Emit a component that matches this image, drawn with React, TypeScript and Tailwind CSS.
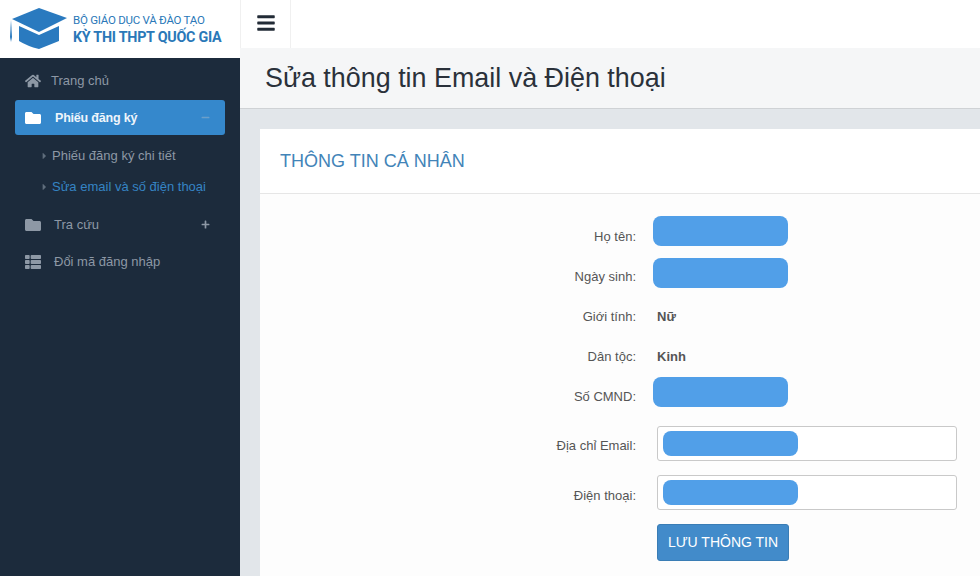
import { FaBars, FaCaretRight, FaFolder, FaHome, FaMinus, FaPlus, FaThList } from "react-icons/fa";

const Logo = () => (
  <svg width="58" height="44" viewBox="0 0 58 44" className="shrink-0">
    <path d="M2 11 L29 0 L57 10 L29 24 Z" fill="#2a7abf" />
    <path d="M9 18 L29 27 L49 18 L49 33 L29 41 Q17 38 9 33 Z" fill="#2a7abf" />
    <path d="M1 12 L2 29 L1 34 L0 29 Z" fill="#2a7abf" />
  </svg>
);

const Pill = ({ w = "w-[135px]", h = "h-[30px]" }: { w?: string; h?: string }) => (
  <div className={`${w} ${h} rounded-[8px] bg-[#519fe8]`} />
);

const Label = ({ text, className = "" }: { text: string; className?: string }) => (
  <div className={`w-[376px] shrink-0 text-right text-[13px] text-[#555] ${className}`}>{text}</div>
);

const App = () => {
  return (
    <div className="flex h-[576px] w-[980px] overflow-hidden font-['Liberation_Sans',sans-serif]">
      <aside className="flex w-[240px] shrink-0 flex-col bg-[#1c2b3c]">
        <div className="flex h-[58px] items-center bg-white pl-[10px] pt-[1px]">
          <Logo />
          <div className="ml-[5px] font-['Roboto',sans-serif] text-[#2a78b8]">
            <div className="text-[11.5px] leading-[16px] tracking-[-0.25px]">BỘ GIÁO DỤC VÀ ĐÀO TẠO</div>
            <div className="text-[14.3px] font-bold leading-[19px] tracking-[-0.25px]">KỲ THI THPT QUỐC GIA</div>
          </div>
        </div>
        <nav className="flex flex-col pt-[5px] text-[13px] text-[#8d98a5]">
          <div className="flex h-[35px] items-center pl-[25px]">
            <FaHome className="h-[16px] w-[16px]" />
            <span className="ml-[10px]">Trang chủ</span>
          </div>
          <div className="mx-[15px] mt-[2px] flex h-[35px] items-center rounded-[3px] bg-[#3588cc] pl-[10px] pr-[15px] text-white">
            <FaFolder className="h-[16px] w-[16px]" />
            <span className="ml-[14px] pt-[1px] text-[12.5px] font-bold tracking-[-0.2px] text-[#eef5fb]">Phiếu đăng ký</span>
            <FaMinus className="ml-auto h-[9px] w-[9px] text-[#6c9fc9]" />
          </div>
          <div className="mt-[5px] flex h-[31px] items-center pl-[41px]">
            <FaCaretRight className="h-[10px] w-[7px] text-[#5f6d7c]" />
            <span className="ml-[4px]">Phiếu đăng ký chi tiết</span>
          </div>
          <div className="flex h-[31px] items-center pl-[41px] text-[#3584c4]">
            <FaCaretRight className="h-[10px] w-[7px] text-[#5f6d7c]" />
            <span className="ml-[4px]">Sửa email và số điện thoại</span>
          </div>
          <div className="mt-[4px] flex h-[37px] items-center pl-[25px] pr-[30px]">
            <FaFolder className="h-[16px] w-[16px]" />
            <span className="ml-[13px]">Tra cứu</span>
            <FaPlus className="ml-auto h-[9px] w-[9px]" />
          </div>
          <div className="flex h-[37px] items-center pl-[25px]">
            <FaThList className="h-[16px] w-[16px]" />
            <span className="ml-[13px]">Đổi mã đăng nhập</span>
          </div>
        </nav>
      </aside>

      <main className="flex min-w-0 flex-1 flex-col bg-[#e2e6ea]">
        <div className="flex h-[48px] shrink-0 bg-white">
          <div className="flex w-[51px] items-center justify-center border-x border-[#f0f0f0] pb-[3px]">
            <FaBars className="h-[20px] w-[20px] text-[#222b36]" />
          </div>
        </div>
        <div className="flex h-[61px] shrink-0 items-center border-b border-[#cfd2d5] bg-[#f5f6f7] pl-[25px]">
          <h1 className="text-[26.9px] text-[#2a313a]">Sửa thông tin Email và Điện thoại</h1>
        </div>
        <section className="ml-[20px] mt-[20px] flex flex-1 flex-col bg-[#fdfdfd]">
          <div className="flex h-[65px] shrink-0 items-center border-b border-[#e6e6e6] bg-white pl-[20px]">
            <h2 className="text-[18px] text-[#4284b8]">THÔNG TIN CÁ NHÂN</h2>
          </div>
          <div className="flex flex-col pt-[22px]">
            <div className="flex h-[30px] items-center">
              <Label text="Họ tên:" className="pt-[11px]" />
              <div className="ml-[17px]"><Pill /></div>
            </div>
            <div className="mt-[12px] flex h-[30px] items-center">
              <Label text="Ngày sinh:" className="pt-[7px]" />
              <div className="ml-[17px]"><Pill /></div>
            </div>
            <div className="mt-[8px] flex h-[40px] items-center">
              <Label text="Giới tính:" className="pt-[1px]" />
              <div className="ml-[21px] pt-[1px] text-[13px] font-bold text-[#555]">Nữ</div>
            </div>
            <div className="flex h-[40px] items-center">
              <Label text="Dân tộc:" className="pt-[1px]" />
              <div className="ml-[21px] pt-[1px] text-[13px] font-bold text-[#555]">Kinh</div>
            </div>
            <div className="mt-[1px] flex h-[30px] items-center">
              <Label text="Số CMND:" className="pt-[9px]" />
              <div className="ml-[17px]"><Pill /></div>
            </div>
            <div className="mt-[19px] flex h-[35px] items-center">
              <Label text="Địa chỉ Email:" className="pt-[5px]" />
              <div className="ml-[21px] flex h-[35px] w-[300px] items-center rounded-[3px] border border-[#c9c9c9] bg-white pl-[5px]">
                <Pill h="h-[25px]" />
              </div>
            </div>
            <div className="mt-[14px] flex h-[35px] items-center">
              <Label text="Điện thoại:" className="pt-[6px]" />
              <div className="ml-[21px] flex h-[35px] w-[300px] items-center rounded-[3px] border border-[#c9c9c9] bg-white pl-[5px]">
                <Pill h="h-[25px]" />
              </div>
            </div>
            <div className="mt-[14px] pl-[397px]">
              <button className="h-[37px] w-[132px] rounded-[3px] border border-[#3a7db5] bg-[#428bca] text-[14px] text-white">
                LƯU THÔNG TIN
              </button>
            </div>
          </div>
        </section>
      </main>
    </div>
  );
};

export default App;
